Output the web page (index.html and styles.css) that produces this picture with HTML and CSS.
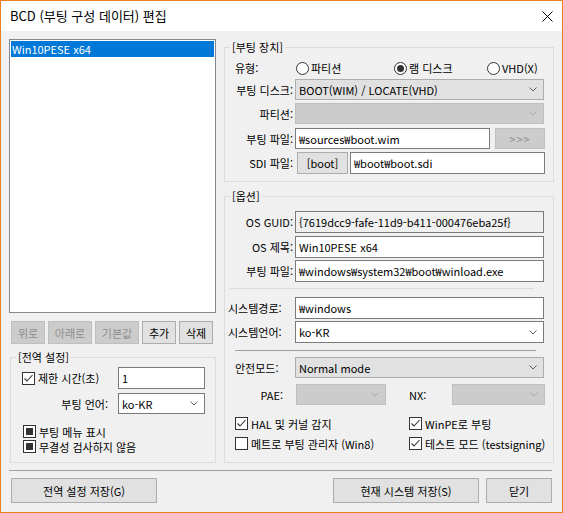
FILE: index.html
```html
<!DOCTYPE html>
<html lang="ko">
<head>
<meta charset="utf-8">
<title>BCD</title>
<link rel="stylesheet" href="styles.css">
</head>
<body>
<div class="window">
  <div class="titlebar">
    <span class="title">BCD (부팅 구성 데이터) 편집</span>
    <svg class="close" width="11" height="11" viewBox="0 0 11 11"><path d="M0.5 0.5 L10.5 10.5 M10.5 0.5 L0.5 10.5" stroke="#000" stroke-width="1" fill="none"/></svg>
  </div>
  <div class="client">
    <div class="main">
      <div class="left">
        <div class="listbox"><div class="item sel">Win10PESE x64</div></div>
        <div class="btnrow">
          <div class="btn dis w34">위로</div>
          <div class="btn dis w44">아래로</div>
          <div class="btn dis w44">기본값</div>
          <div class="btn w34">추가</div>
          <div class="btn w34">삭제</div>
        </div>
        <div class="group global">
          <div class="glabel">[전역 설정]</div>
          <div class="g1">
            <div class="chklab">
              <span class="cb"><svg width="11" height="11" viewBox="0 0 11 11"><path d="M1.5 5.5 L4 8 L9.5 2" fill="none" stroke="#333" stroke-width="1.1"/></svg></span>
              <span class="cbt">제한 시간(초)</span>
            </div>
            <div class="edit w87">1</div>
          </div>
          <div class="g2">
            <div class="lab-r w107">부팅 언어:</div>
            <div class="combo edit-combo w87"><span>ko-KR</span><svg class="chev" width="8" height="5" viewBox="0 0 8 5"><path d="M0.5 0.5 L4 4 L7.5 0.5" fill="none" stroke="#606060"/></svg></div>
          </div>
          <div class="g3">
            <div class="cbrow"><span class="cb fill"><span class="sq"></span></span><span class="cbt">부팅 메뉴 표시</span></div>
            <div class="cbrow"><span class="cb fill"><span class="sq"></span></span><span class="cbt">무결성 검사하지 않음</span></div>
          </div>
        </div>
      </div>
      <div class="right">
        <div class="group boot">
          <div class="glabel">[부팅 장치]</div>
          <div class="typerow">
            <span class="typelab">유형:</span>
            <span class="radio r1"><span class="rb"></span><span class="rt">파티션</span></span>
            <span class="radio r2"><span class="rb on"><span class="dot"></span></span><span class="rt">램 디스크</span></span>
            <span class="radio r3"><span class="rb"></span><span class="rt">VHD(X)</span></span>
          </div>
          <div class="row h21 mt1">
            <div class="lab-r w70">부팅 디스크:</div>
            <div class="combo list-combo w249"><span>BOOT(WIM) / LOCATE(VHD)</span><svg class="chev" width="8" height="5" viewBox="0 0 8 5"><path d="M0.5 0.5 L4 4 L7.5 0.5" fill="none" stroke="#606060"/></svg></div>
          </div>
          <div class="row h21 mt3">
            <div class="lab-r w70">파티션:</div>
            <div class="combo dis-combo w249"><span></span><svg class="chev" width="8" height="5" viewBox="0 0 8 5"><path d="M0.5 0.5 L4 4 L7.5 0.5" fill="none" stroke="#a8a8a8"/></svg></div>
          </div>
          <div class="row h21 mt4">
            <div class="lab-r w70">부팅 파일:</div>
            <div class="edit w195">₩sources₩boot.wim</div>
            <div class="btn dis w50 ml5 arrows">&gt;&gt;&gt;</div>
          </div>
          <div class="row h22 mt3">
            <div class="lab-r w70">SDI 파일:</div>
            <div class="btn w51 ml2">[boot]</div>
            <div class="edit w195 ml2">₩boot₩boot.sdi</div>
          </div>
        </div>
        <div class="group opts">
          <div class="glabel">[옵션]</div>
          <div class="row h22 mt7">
            <div class="lab-r w70">OS GUID:</div>
            <div class="edit ro w249">{7619dcc9-fafe-11d9-b411-000476eba25f}</div>
          </div>
          <div class="row h22 mt3">
            <div class="lab-r w70">OS 제목:</div>
            <div class="edit w249">Win10PESE x64</div>
          </div>
          <div class="row h22 mt2">
            <div class="lab-r w70">부팅 파일:</div>
            <div class="edit w249">₩windows₩system32₩boot₩winload.exe</div>
          </div>
          <div class="hline1"></div>
          <div class="row h22 mt8">
            <div class="lab-l w70 pl3">시스템경로:</div>
            <div class="edit w249">₩windows</div>
          </div>
          <div class="row h22 mt2">
            <div class="lab-l w70 pl3">시스템언어:</div>
            <div class="combo edit-combo w249"><span>ko-KR</span><svg class="chev" width="8" height="5" viewBox="0 0 8 5"><path d="M0.5 0.5 L4 4 L7.5 0.5" fill="none" stroke="#606060"/></svg></div>
          </div>
          <div class="hline2"></div>
          <div class="row h21 mt6">
            <div class="lab-l w70 pl10">안전모드:</div>
            <div class="combo list-combo w249"><span>Normal mode</span><svg class="chev" width="8" height="5" viewBox="0 0 8 5"><path d="M0.5 0.5 L4 4 L7.5 0.5" fill="none" stroke="#606060"/></svg></div>
          </div>
          <div class="row h21 mt6">
            <div class="lab-r w60">PAE:</div>
            <div class="combo dis-combo w90 ml11"><span></span><svg class="chev" width="8" height="5" viewBox="0 0 8 5"><path d="M0.5 0.5 L4 4 L7.5 0.5" fill="none" stroke="#a8a8a8"/></svg></div>
            <div class="lab-l nxlab">NX:</div>
            <div class="combo dis-combo w93"><span></span><svg class="chev" width="8" height="5" viewBox="0 0 8 5"><path d="M0.5 0.5 L4 4 L7.5 0.5" fill="none" stroke="#a8a8a8"/></svg></div>
          </div>
          <div class="chkgrid">
            <div class="cbrow"><span class="cb"><svg width="11" height="11" viewBox="0 0 11 11"><path d="M1.5 5.5 L4 8 L9.5 2" fill="none" stroke="#333" stroke-width="1.1"/></svg></span><span class="cbt">HAL 및 커널 감지</span></div>
            <div class="cbrow"><span class="cb"><svg width="11" height="11" viewBox="0 0 11 11"><path d="M1.5 5.5 L4 8 L9.5 2" fill="none" stroke="#333" stroke-width="1.1"/></svg></span><span class="cbt">WinPE로 부팅</span></div>
            <div class="cbrow"><span class="cb"></span><span class="cbt">메트로 부팅 관리자 (Win8)</span></div>
            <div class="cbrow"><span class="cb"><svg width="11" height="11" viewBox="0 0 11 11"><path d="M1.5 5.5 L4 8 L9.5 2" fill="none" stroke="#333" stroke-width="1.1"/></svg></span><span class="cbt">테스트 모드 (testsigning)</span></div>
          </div>
        </div>
      </div>
    </div>
    <div class="sep"></div>
    <div class="bottom">
      <div class="btn bbig">전역 설정 저장(G)</div>
      <div class="spacer"></div>
      <div class="btn bbig">현재 시스템 저장(S)</div>
      <div class="btn bclose">닫기</div>
    </div>
  </div>
</div>
</body>
</html>
```

FILE: styles.css
```css
* { box-sizing: border-box; }
html, body { margin: 0; padding: 0; background: #f0f0f0; }
body {
  font-family: "Noto Sans CJK KR", "Noto Sans", sans-serif;
  font-size: 11px;
  line-height: 16px;
  color: #000;
}
.window {
  width: 563px;
  height: 513px;
  border: 1px solid #e8801f;
  background: #f0f0f0;
  display: flex;
  flex-direction: column;
}
.titlebar {
  height: 30px;
  flex: none;
  background: #fff;
  display: flex;
  align-items: center;
  padding-left: 9px;
}
.title { flex: 1; font-size: 13px; }
.close { margin-right: 9px; }
.client { flex: 1; }
.main { display: flex; align-items: flex-start; padding: 8px 8px 0 8px; }
.left { width: 207px; display: flex; flex-direction: column; }
.right { width: 330px; margin-left: 8px; }

.listbox {
  height: 274px;
  background: #fff;
  border: 1px solid #828790;
  padding: 1px;
}
.item { height: 16px; line-height: 16px; padding-left: 1px; }
.item.sel { background: #0078d7; color: #fff; }

.btnrow { display: flex; height: 23px; margin-top: 8px; padding-left: 2px; gap: 3px; }
.btn {
  display: flex;
  align-items: center;
  justify-content: center;
  background: #e1e1e1;
  border: 1px solid #adadad;
  height: 100%;
  white-space: nowrap;
}
.btn.dis { background: #cccccc; border-color: #bfbfbf; color: #8d8d8d; }
.w34 { width: 34px; }
.w44 { width: 44px; }
.w50 { width: 50px; }
.w51 { width: 51px; }
.w60 { width: 60px; }
.w70 { width: 70px; }
.w87 { width: 87px; }
.w90 { width: 90px; }
.w93 { width: 93px; }
.w107 { width: 107px; }
.w195 { width: 195px; }
.w249 { width: 249px; }
.ml2 { margin-left: 2px; }
.ml5 { margin-left: 5px; }
.ml11 { margin-left: 11px; }
.mt1 { margin-top: 1px; }
.mt2 { margin-top: 2px; }
.mt3 { margin-top: 3px; }
.mt4 { margin-top: 4px; }
.mt6 { margin-top: 6px; }
.mt7 { margin-top: 7px; }
.mt8 { margin-top: 8px; }
.h21 { height: 21px; }
.h22 { height: 22px; }
.pl3 { padding-left: 3px; }
.pl10 { padding-left: 10px; }

.group { border: 1px solid #dcdcdc; }
.glabel {
  margin: -9px 0 0 5px;
  padding: 0 2px;
  width: max-content;
  height: 16px;
  line-height: 16px;
  background: #f0f0f0;
}
.global { margin: 13px 0 0 1px; width: 206px; height: 106px; }
.boot { margin-top: 8px; height: 135px; }
.opts { margin-top: 14px; height: 267px; }

.g1 { display: flex; align-items: center; height: 22px; margin-top: 2px; padding-left: 11px; }
.chklab { width: 96px; display: flex; align-items: center; }
.g2 { display: flex; align-items: center; height: 21px; margin-top: 4px; }
.g3 { margin-top: 10px; padding-left: 12px; }

.cb {
  width: 13px;
  height: 13px;
  border: 1px solid #333;
  background: #fff;
  display: flex;
  align-items: center;
  justify-content: center;
  flex: none;
}
.cb.fill .sq { width: 7px; height: 7px; background: #333; }
.cbt { margin-left: 3px; white-space: nowrap; line-height: 14px; }
.cbrow { display: flex; align-items: center; height: 15px; }

.edit {
  height: 100%;
  background: #fff;
  border: 1px solid #7a7a7a;
  padding-left: 3px;
  display: flex;
  align-items: center;
  white-space: nowrap;
  overflow: hidden;
}
.g1 .edit { height: 22px; }
.edit.ro { background: #f0f0f0; }

.combo {
  height: 100%;
  display: flex;
  align-items: center;
  justify-content: space-between;
  padding: 0 6px 0 3px;
  border: 1px solid #adadad;
  white-space: nowrap;
}
.list-combo { background: #e1e1e1; border-color: #adadad; }
.dis-combo { background: #cccccc; border-color: #bfbfbf; }
.edit-combo { background: #fff; border-color: #7a7a7a; }
.chev { flex: none; }

.lab-r { text-align: right; padding-right: 2px; white-space: nowrap; flex: none; }
.lab-l { text-align: left; white-space: nowrap; flex: none; }
.g2 .lab-r { padding-right: 10px; }

.row { display: flex; align-items: center; }
.arrows { color: #9a9a9a; letter-spacing: 1px; }

.typerow { display: flex; align-items: center; height: 20px; margin-top: 3px; padding-left: 10px; }
.typelab { width: 61px; }
.radio { display: flex; align-items: center; }
.r1 { width: 98px; }
.r2 { width: 93px; }
.rb {
  width: 13px;
  height: 13px;
  border: 1px solid #333;
  border-radius: 50%;
  background: #fff;
  display: flex;
  align-items: center;
  justify-content: center;
  flex: none;
}
.rb .dot { width: 7px; height: 7px; border-radius: 50%; background: #333; }
.rt { margin-left: 2px; white-space: nowrap; }

.hline1 { margin: 6px 19px 0 5px; border-top: 1px solid #dcdcdc; }
.hline2 { margin: 7px 17px 0 10px; border-top: 1px solid #a0a0a0; }
.nxlab { margin-left: 23px; width: 43px; }

.chkgrid {
  display: grid;
  grid-template-columns: 174px 1fr;
  row-gap: 5px;
  margin-top: 11px;
  padding-left: 10px;
}

.sep { margin: 7px 10px 0 8px; border-top: 1px solid #a0a0a0; }
.bottom { display: flex; height: 25px; margin-top: 7px; padding: 0 10px; }
.bbig { width: 146px; }
.bclose { width: 66px; margin-left: 7px; }
.spacer { flex: 1; }
```
